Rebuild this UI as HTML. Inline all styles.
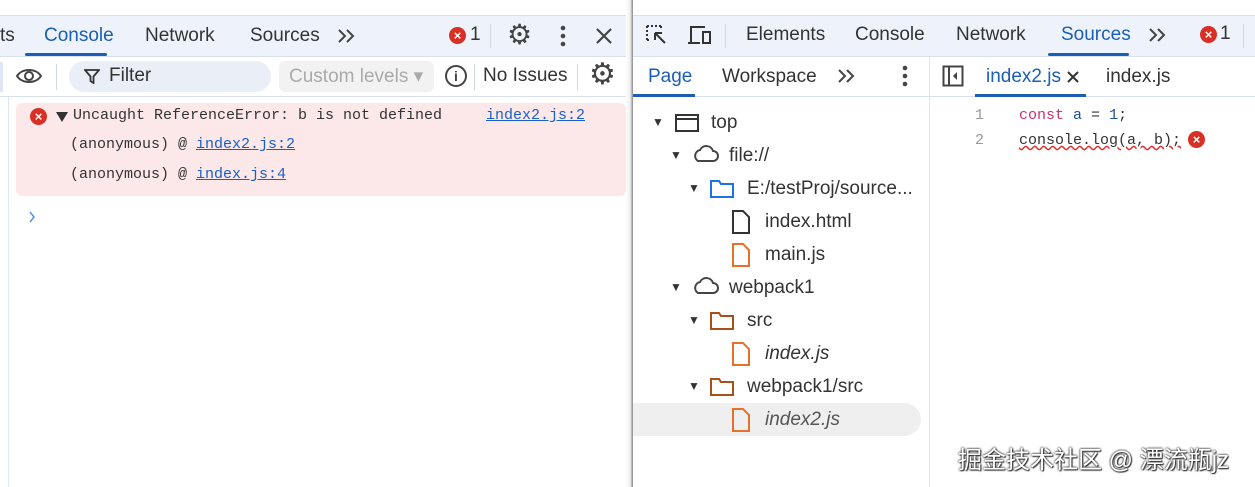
<!DOCTYPE html><html><head><style>
*{margin:0;padding:0;box-sizing:border-box}
body{width:1255px;height:487px;background:#fff;position:relative;overflow:hidden;font-family:"Liberation Sans","Noto Sans CJK SC",sans-serif;color:#333}
.a{position:absolute;white-space:nowrap}
.t{font-size:19px;color:#333}
.blue{color:#1a5fb4}
.mono{font-family:"Liberation Mono",monospace;font-size:15px;color:#333}
.lnk{color:#1a5fc8;text-decoration:underline}
</style></head><body>
<div class="a" style="left:0;top:15px;width:626px;height:42px;background:#eef3fb;border-top:1px solid #d8e0ee;border-bottom:1px solid #d8e0ee"></div>
<div class="a" style="left:633px;top:15px;width:622px;height:42px;background:#eef3fb;border-top:1px solid #d8e0ee;border-bottom:1px solid #d8e0ee"></div>
<div class="a" style="left:0;top:57px;width:626px;height:40px;background:#fff;border-bottom:1px solid #d8e0ee"></div>
<div class="a" style="left:633px;top:57px;width:622px;height:40px;border-bottom:1px solid #d8e0ee"></div>
<div class="a" style="left:626px;top:0;width:7px;height:487px;background:linear-gradient(90deg,#fff,#eee 60%,#888)"></div>
<!-- left tabs -->
<div class="a t" style="left:0;top:25px">ts</div>
<div class="a t blue" style="left:44px;top:25px">Console</div>
<div class="a" style="left:25px;top:53px;width:82px;height:3px;background:#1a5fb4;border-radius:2px"></div>
<div class="a t" style="left:145px;top:25px">Network</div>
<div class="a t" style="left:250px;top:25px">Sources</div>
<svg class="a" style="left:337px;top:28px" width="20" height="16"><path d="M2 2l6 6-6 6M10 2l6 6-6 6" fill="none" stroke="#444" stroke-width="2"/></svg>
<div class="a" style="left:449px;top:27px;width:17px;height:17px;border-radius:50%;background:#d93025;color:#fff;font-size:13px;text-align:center;line-height:17px;font-weight:bold">×</div>
<div class="a t" style="left:470px;top:24px">1</div>
<div class="a" style="left:490px;top:24px;width:1px;height:24px;background:#d0d7e3"></div>
<div class="a" style="left:507px;top:18px;font-size:28px;color:#444">⚙</div>
<svg class="a" style="left:559px;top:25px" width="8" height="22"><circle cx="4" cy="3" r="2.3" fill="#444"/><circle cx="4" cy="11" r="2.3" fill="#444"/><circle cx="4" cy="19" r="2.3" fill="#444"/></svg>
<svg class="a" style="left:595px;top:27px" width="18" height="18"><path d="M2 2l14 14M16 2L2 16" stroke="#444" stroke-width="2.2"/></svg>
<!-- left toolbar -->
<div class="a" style="left:0;top:62px;width:3px;height:30px;background:#dfe6f2"></div>
<svg class="a" style="left:15px;top:66px" width="28" height="20" viewBox="0 0 28 20"><path d="M2 10C7 2 21 2 26 10C21 18 7 18 2 10Z" fill="none" stroke="#444" stroke-width="2"/><circle cx="14" cy="10" r="4" fill="none" stroke="#444" stroke-width="2"/></svg>
<div class="a" style="left:56px;top:64px;width:1px;height:26px;background:#d0d7e3"></div>
<div class="a" style="left:69px;top:61px;width:202px;height:31px;border-radius:16px;background:#e9eef7"></div>
<svg class="a" style="left:84px;top:68px" width="16" height="16" viewBox="0 0 16 16"><path d="M1 2H15L9.5 8.5V15L6.5 13V8.5Z" fill="none" stroke="#333" stroke-width="1.8"/></svg>
<div class="a t" style="left:109px;top:65px">Filter</div>
<div class="a" style="left:279px;top:61px;width:155px;height:31px;border-radius:6px;background:#f2f2f2"></div>
<div class="a t" style="left:289px;top:65px;color:#aaa">Custom levels ▾</div>
<div class="a" style="left:445px;top:65px;width:22px;height:22px;border:2px solid #444;border-radius:50%;text-align:center;font-size:14px;line-height:18px;font-weight:bold;color:#444">i</div>
<div class="a" style="left:474px;top:64px;width:1px;height:26px;background:#d0d7e3"></div>
<div class="a t" style="left:483px;top:65px">No Issues</div>
<div class="a" style="left:577px;top:64px;width:1px;height:26px;background:#d0d7e3"></div>
<div class="a" style="left:589px;top:57px;font-size:30px;color:#444">⚙</div>
<!-- console -->
<div class="a" style="left:8px;top:97px;width:1px;height:390px;background:#dfe6f2"></div>
<div class="a" style="left:16px;top:103px;width:610px;height:93px;background:#fce8e8;border-radius:6px"></div>
<div class="a" style="left:30px;top:108px;width:17px;height:17px;border-radius:50%;background:#d93025;color:#fff;font-size:13px;text-align:center;line-height:17px;font-weight:bold">×</div>
<svg class="a" style="left:56px;top:112px" width="12" height="10"><path d="M0 0h12L6 10z" fill="#333"/></svg>
<div class="a mono" style="left:73px;top:107px">Uncaught ReferenceError: b is not defined</div>
<div class="a mono lnk" style="left:486px;top:107px">index2.js:2</div>
<div class="a mono" style="left:70px;top:136px">(anonymous) @ <span class="lnk">index2.js:2</span></div>
<div class="a mono" style="left:70px;top:166px">(anonymous) @ <span class="lnk">index.js:4</span></div>
<svg class="a" style="left:28px;top:210px" width="8" height="14"><path d="M2 2l4 5-4 5" fill="none" stroke="#5b8ee6" stroke-width="1.5"/></svg>
<!-- right tabs -->
<svg class="a" style="left:645px;top:24px" width="24" height="22" viewBox="0 0 24 22"><path d="M2 2h14M2 2v14M2 16h4M16 2v4" fill="none" stroke="#333" stroke-width="2" stroke-dasharray="2 2"/><path d="M10 9l10 10M10 9v7M10 9h7" fill="none" stroke="#333" stroke-width="2"/></svg>
<svg class="a" style="left:687px;top:24px" width="26" height="22" viewBox="0 0 26 22"><path d="M4 18V3h14M1 19h12" fill="none" stroke="#333" stroke-width="2"/><rect x="16" y="8" width="7" height="11" fill="none" stroke="#333" stroke-width="2"/></svg>
<div class="a" style="left:725px;top:24px;width:1px;height:24px;background:#d0d7e3"></div>
<div class="a t" style="left:746px;top:24px">Elements</div>
<div class="a t" style="left:855px;top:24px">Console</div>
<div class="a t" style="left:956px;top:24px">Network</div>
<div class="a t blue" style="left:1061px;top:24px">Sources</div>
<div class="a" style="left:1048px;top:53px;width:81px;height:3px;background:#1a5fb4;border-radius:2px"></div>
<svg class="a" style="left:1148px;top:27px" width="20" height="16"><path d="M2 2l6 6-6 6M10 2l6 6-6 6" fill="none" stroke="#444" stroke-width="2"/></svg>
<div class="a" style="left:1200px;top:26px;width:17px;height:17px;border-radius:50%;background:#d93025;color:#fff;font-size:13px;text-align:center;line-height:17px;font-weight:bold">×</div>
<div class="a t" style="left:1220px;top:23px">1</div>
<div class="a" style="left:1243px;top:24px;width:1px;height:24px;background:#d0d7e3"></div>
<!-- right row 2 -->
<div class="a t blue" style="left:648px;top:66px">Page</div>
<div class="a" style="left:633px;top:94px;width:62px;height:3px;background:#1a5fb4"></div>
<div class="a t" style="left:722px;top:66px">Workspace</div>
<svg class="a" style="left:837px;top:68px" width="20" height="16"><path d="M2 2l6 6-6 6M10 2l6 6-6 6" fill="none" stroke="#444" stroke-width="2"/></svg>
<svg class="a" style="left:901px;top:65px" width="8" height="22"><circle cx="4" cy="3" r="2.3" fill="#444"/><circle cx="4" cy="11" r="2.3" fill="#444"/><circle cx="4" cy="19" r="2.3" fill="#444"/></svg>
<div class="a" style="left:929px;top:57px;width:1px;height:430px;background:#e3e8f0"></div>
<svg class="a" style="left:942px;top:65px" width="22" height="22" viewBox="0 0 22 22"><rect x="1.5" y="1.5" width="19" height="19" fill="none" stroke="#444" stroke-width="2"/><path d="M7 2v18" stroke="#444" stroke-width="2"/><path d="M15 7l-4 4 4 4z" fill="#444"/></svg>
<div class="a t blue" style="left:986px;top:66px">index2.js</div>
<svg class="a" style="left:1066px;top:70px" width="14" height="14"><path d="M2 2l10 10M12 2L2 12" stroke="#333" stroke-width="2"/></svg>
<div class="a" style="left:975px;top:94px;width:111px;height:3px;background:#1a5fb4"></div>
<div class="a t" style="left:1106px;top:66px">index.js</div>
<!-- code -->
<div class="a mono" style="left:975px;top:107px;color:#999">1</div>
<div class="a mono" style="left:975px;top:132px;color:#999">2</div>
<div class="a mono" style="left:1019px;top:107px"><span style="color:#c8336b">const</span> <span style="color:#1f4fa0">a</span> = <span style="color:#1f4fa0">1</span>;</div>
<div class="a mono" style="left:1019px;top:132px;text-decoration:underline wavy #e03030">console.log(a, b);</div>
<div class="a" style="left:1188px;top:131px;width:17px;height:17px;border-radius:50%;background:#d93025;color:#fff;font-size:13px;text-align:center;line-height:17px;font-weight:bold">×</div>
<!-- tree -->
<div class="a" style="left:633px;top:403px;width:288px;height:33px;background:#efefef;border-radius:0 17px 17px 0"></div>
<div class="a" style="left:652px;top:115px;font-size:12px">▼</div>
<svg class="a" style="left:674px;top:112px" width="26" height="22"><rect x="2" y="3" width="22" height="16" fill="none" stroke="#333" stroke-width="2"/><path d="M2 7h22" stroke="#333" stroke-width="2"/></svg>
<div class="a t" style="left:711px;top:112px">top</div>
<div class="a" style="left:670px;top:148px;font-size:12px">▼</div>
<svg class="a" style="left:691px;top:144px" width="28" height="20"><path d="M7 17h15a5 5 0 0 0 0-10a7 7 0 0 0-13-1a6 6 0 0 0-2 11z" fill="none" stroke="#444" stroke-width="2"/></svg>
<div class="a t" style="left:729px;top:145px">file://</div>
<div class="a" style="left:688px;top:181px;font-size:12px">▼</div>
<svg class="a" style="left:709px;top:177px" width="26" height="22"><path d="M2 4h8l2 3h12v13H2z" fill="none" stroke="#1a73e8" stroke-width="2"/></svg>
<div class="a t" style="left:747px;top:178px">E:/testProj/source...</div>
<svg class="a" style="left:731px;top:209px" width="20" height="26"><path d="M2 2h10l6 6v16H2z" fill="none" stroke="#333" stroke-width="2"/></svg>
<div class="a t" style="left:765px;top:211px">index.html</div>
<svg class="a" style="left:731px;top:242px" width="20" height="26"><path d="M2 2h10l6 6v16H2z" fill="none" stroke="#e8702a" stroke-width="2"/></svg>
<div class="a t" style="left:765px;top:244px">main.js</div>
<div class="a" style="left:670px;top:280px;font-size:12px">▼</div>
<svg class="a" style="left:691px;top:276px" width="28" height="20"><path d="M7 17h15a5 5 0 0 0 0-10a7 7 0 0 0-13-1a6 6 0 0 0-2 11z" fill="none" stroke="#444" stroke-width="2"/></svg>
<div class="a t" style="left:729px;top:277px">webpack1</div>
<div class="a" style="left:688px;top:313px;font-size:12px">▼</div>
<svg class="a" style="left:709px;top:309px" width="26" height="22"><path d="M2 4h8l2 3h12v13H2z" fill="none" stroke="#a8501a" stroke-width="2"/></svg>
<div class="a t" style="left:747px;top:310px">src</div>
<svg class="a" style="left:731px;top:341px" width="20" height="26"><path d="M2 2h10l6 6v16H2z" fill="none" stroke="#e8702a" stroke-width="2"/></svg>
<div class="a t" style="left:765px;top:343px;font-style:italic">index.js</div>
<div class="a" style="left:688px;top:379px;font-size:12px">▼</div>
<svg class="a" style="left:709px;top:375px" width="26" height="22"><path d="M2 4h8l2 3h12v13H2z" fill="none" stroke="#a8501a" stroke-width="2"/></svg>
<div class="a t" style="left:747px;top:376px">webpack1/src</div>
<svg class="a" style="left:731px;top:407px" width="20" height="26"><path d="M2 2h10l6 6v16H2z" fill="none" stroke="#e8702a" stroke-width="2"/></svg>
<div class="a t" style="left:765px;top:409px;font-style:italic;color:#555">index2.js</div>
<div class="a" style="left:958px;top:440px;font-size:24px;color:#fff;text-shadow:0 0 2px #333,0 0 2px #333,1px 1px 1px #333">掘金技术社区 @ 漂流瓶jz</div>
</body></html>
